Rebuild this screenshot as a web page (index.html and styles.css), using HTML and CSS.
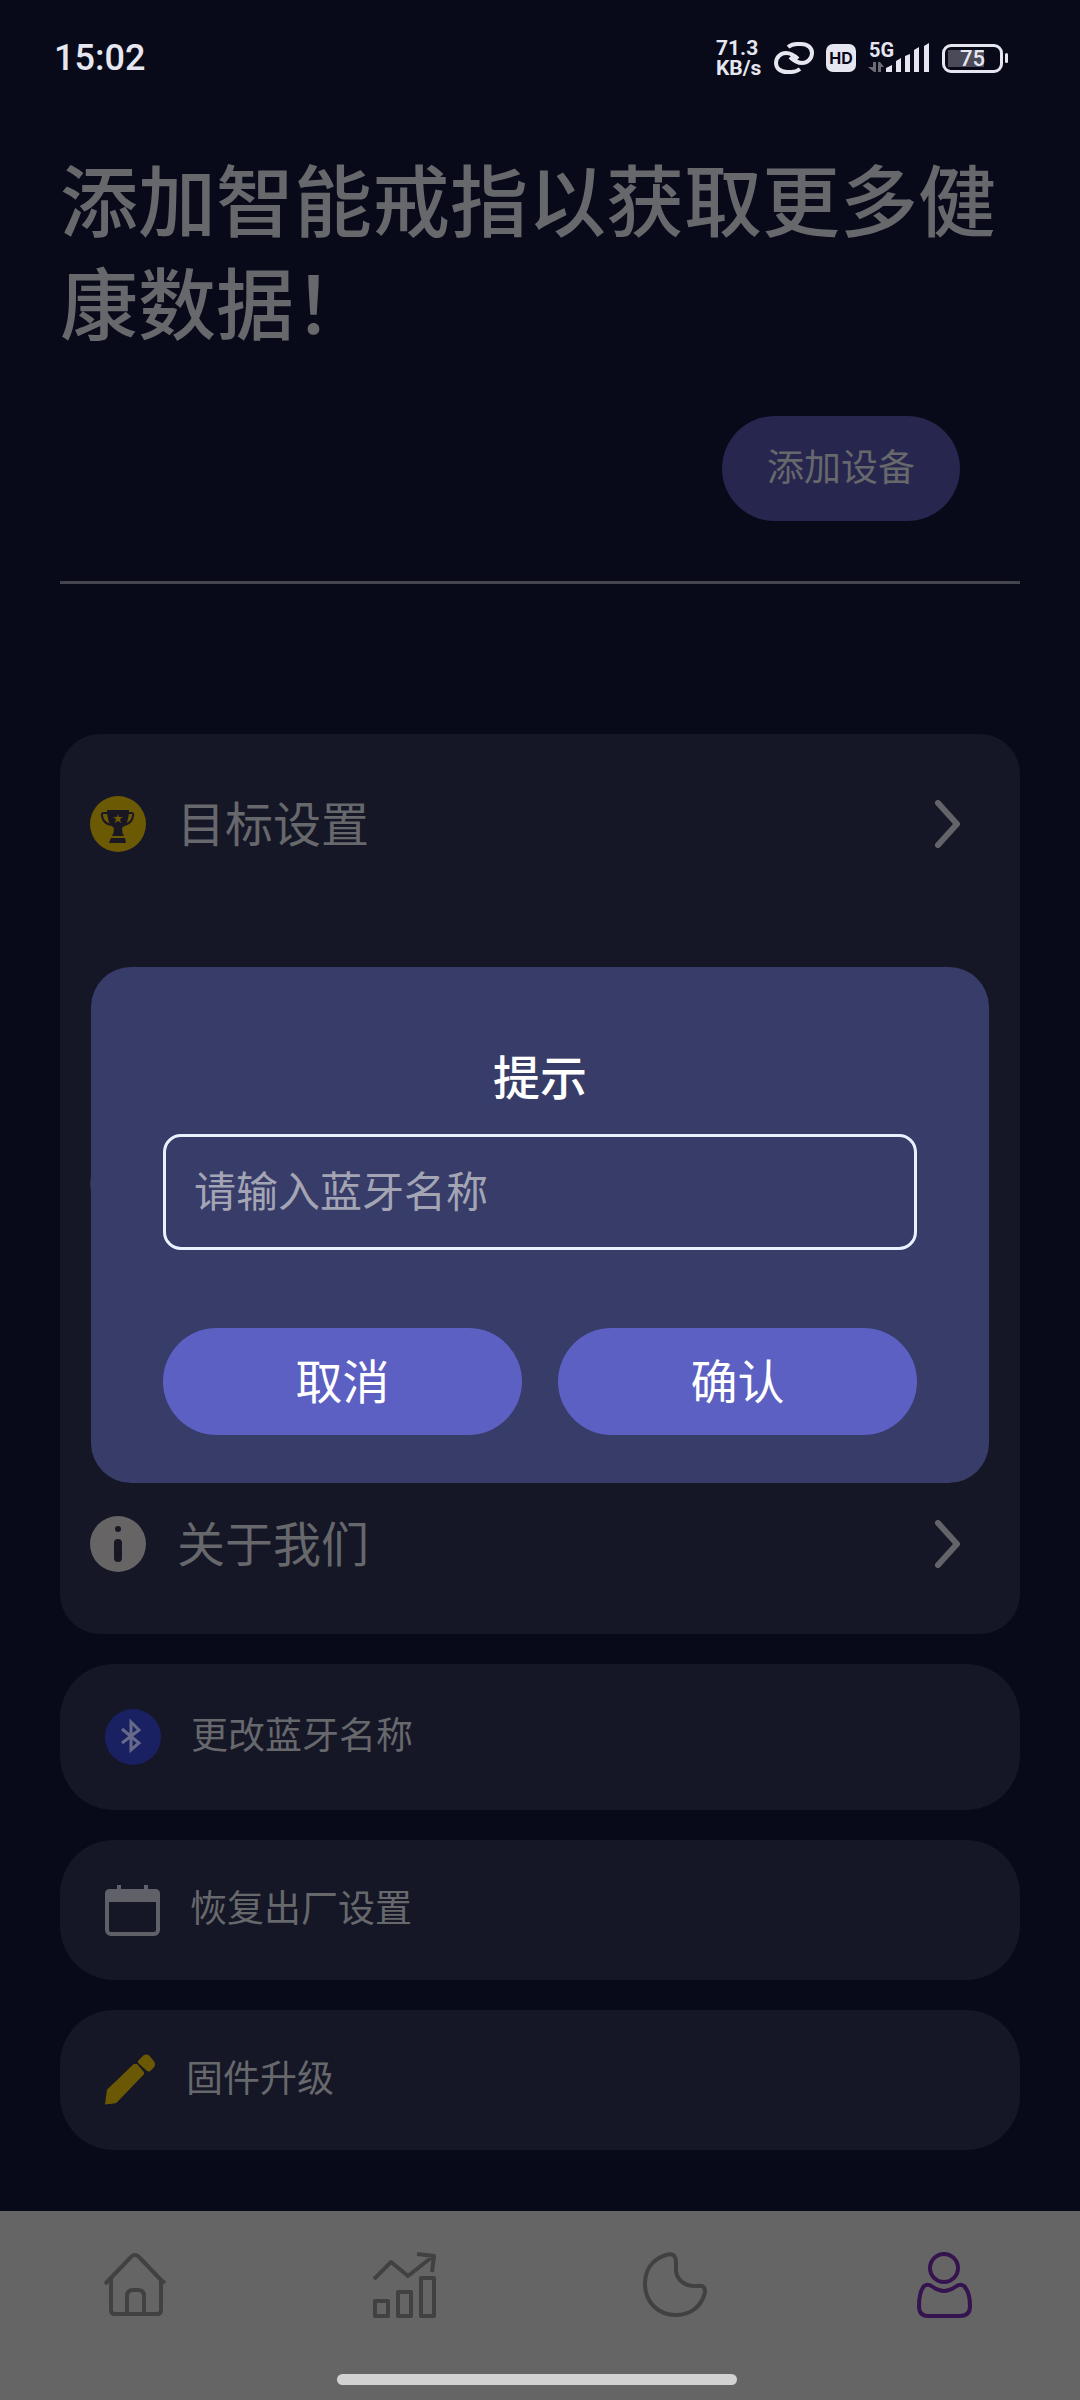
FILE: index.html
```html
<!DOCTYPE html>
<html lang="zh-CN">
<head>
<meta charset="utf-8">
<meta name="viewport" content="width=device-width, initial-scale=1">
<title>我的</title>
<link rel="stylesheet" href="styles.css">
</head>
<body>
<header class="status">
  <time class="clock">15:02</time>
  <div class="indicators">
    <div class="speed"><span>71.3</span><span>KB/s</span></div>
    <svg width="40" height="32" viewBox="0 0 40 32" fill="none" stroke="currentColor" stroke-width="4">
      <path d="M14 5Q18 2 23 2H27C34 2 38 6 38 11C38 17 33 21 28 21C23 21 20 19 16 15"/>
      <path d="M26 27Q22 30 17 30H13C6 30 2 26 2 21C2 15 7 11 12 11C17 11 20 13 24 17"/>
    </svg>
    <span class="hd">HD</span>
    <div class="signal">
      <span class="net">5G</span>
      <svg width="62" height="32" viewBox="0 0 62 32" fill="currentColor">
        <path opacity=".45" d="M5 20h3v10H6L0 25h5zM10 20h2l4 5h-3v5h-3z"/>
        <path d="M18 30v-4l6-3v7zM28 30V19l5-3v14zM37 30V14l5-2v18zM46 30V8l5-3v25zM56 30V4l5-3v29z"/>
      </svg>
    </div>
    <div class="battery"><span class="battery-body">75</span><span class="battery-tip"></span></div>
  </div>
</header>

<main class="page">
  <h1 class="headline">添加智能戒指以获取更多健康数据！</h1>
  <button class="add-device" type="button">添加设备</button>
  <hr class="divider">

  <ul class="menu">
    <li><a class="menu-row" href="#goal">
      <svg width="56" height="56" viewBox="0 0 56 56">
        <circle cx="28" cy="28" r="28" fill="#6c5904"/>
        <path d="M18 17h-4q-3 0-2 3q1 7 9 9M37 17h4q3 0 2 3q-1 7-9 9" fill="none" stroke="#191724" stroke-width="2"/>
        <path d="M17 14h22q0 14-7 18q0 5 2 8H22q2-3 2-8q-7-4-7-18zM21 42h14l1 5H19z" fill="#191724"/>
        <path d="M28 18l1 3h4l-3 2 1 4-3-2-3 2 1-4-3-2h4z" fill="#6c5904"/>
      </svg>
      <span class="menu-label">目标设置</span>
      <svg class="chevron" width="26" height="48" viewBox="0 0 26 48"><path d="M3 3L22 24L3 45"/></svg>
    </a></li>
    <li class="menu-row"></li>
    <li class="menu-row">
      <svg width="56" height="56" viewBox="0 0 56 56"><circle cx="28" cy="28" r="28" fill="#40382a"/></svg>
    </li>
    <li class="menu-row"></li>
    <li><a class="menu-row" href="#about">
      <svg width="56" height="56" viewBox="0 0 56 56">
        <circle cx="28" cy="28" r="28" fill="#666465"/>
        <circle cx="28" cy="13" r="3" fill="#191724"/>
        <rect x="24" y="23" width="8" height="23" rx="4" fill="#191724"/>
      </svg>
      <span class="menu-label">关于我们</span>
      <svg class="chevron" width="26" height="48" viewBox="0 0 26 48"><path d="M3 3L22 24L3 45"/></svg>
    </a></li>
  </ul>

  <button class="action action-tall" type="button">
    <svg width="56" height="56" viewBox="0 0 56 56">
      <circle cx="28" cy="28" r="28" fill="#1a2162"/>
      <path d="M17 20L34 34L26 41V13L34 21L17 34" fill="none" stroke="#67698a" stroke-width="3"/>
    </svg>
    更改蓝牙名称
  </button>
  <button class="action" type="button">
    <svg width="55" height="56" viewBox="0 0 55 56">
      <path d="M12 3h4v5h-4zM39 3h4v5h-4z" fill="#606168"/>
      <rect x="2" y="9" width="51" height="43" rx="4" fill="none" stroke="#606168" stroke-width="4"/>
      <path d="M0 20v-8q0-5 5-5h45q5 0 5 5v8z" fill="#606168"/>
    </svg>
    恢复出厂设置
  </button>
  <button class="action" type="button">
    <svg width="51" height="52" viewBox="0 0 52 52" fill="#6b5804">
      <path d="M0 51L2 36L29 10Q31 9 33 10L39 17Q41 19 39 21L14 47Q12 50 9 50Z"/>
      <path d="M34 6L39 1Q42-1 45 1L50 7Q52 10 50 13L46 17Q44 18 42 16L34 9Q33 7 34 6Z"/>
    </svg>
    固件升级
  </button>
</main>

<nav class="tabs">
  <a href="#home" aria-label="首页">
    <svg width="64" height="66" viewBox="0 0 64 66">
      <path d="M2 32L27 6Q32 0 37 6L58 28L62 31M8 27V58Q8 62 12 62H54Q58 62 58 58V27M24 62V44Q24 38 30 38H35Q41 38 41 44V62"/>
    </svg>
  </a>
  <a href="#stats" aria-label="统计">
    <svg width="64" height="66" viewBox="0 0 64 66">
      <path d="M1 27L18 10L35 24L59 5M44 2L61 4L59 20M2 49H15V64H2zM25 40H38V64H25zM48 26H61V64H48z"/>
    </svg>
  </a>
  <a href="#sleep" aria-label="睡眠">
    <svg width="64" height="66" viewBox="0 0 64 66">
      <path d="M23 3Q32 0 33 9V19C34 28 42 34 51 34H56Q62 33 62 40C59 54 48 63 33 63C15 63 2 50 2 32C2 17 10 7 23 3Z"/>
    </svg>
  </a>
  <a class="active" href="#me" aria-label="我的" aria-current="page">
    <svg width="64" height="66" viewBox="0 0 64 66">
      <circle cx="31" cy="16" r="14"/>
      <path d="M11 34Q15 31 20 35Q31 43 42 35Q47 31 51 34C56 39 57 47 57 54Q57 64 47 64H15Q6 64 6 54C6 47 7 39 11 34Z"/>
    </svg>
  </a>
  <span class="gesture-bar"></span>
</nav>

<div class="overlay">
  <form class="dialog" role="dialog" aria-labelledby="dialog-title">
    <h2 class="dialog-title" id="dialog-title">提示</h2>
    <input class="field" type="text" aria-label="蓝牙名称" placeholder="请输入蓝牙名称">
    <div class="dialog-actions">
      <button type="button">取消</button>
      <button type="button">确认</button>
    </div>
  </form>
</div>
</body>
</html>
```
FILE: styles.css
```css
* {
  box-sizing: border-box;
}

body {
  margin: 0;
  min-height: 100vh;
  display: flex;
  flex-direction: column;
  background: #080919;
  color: #66686c;
  font-family: Roboto, "Noto Sans CJK SC", sans-serif;
}

a {
  color: inherit;
  text-decoration: none;
}

button,
input {
  margin: 0;
  border: 0;
  font: inherit;
  color: inherit;
}

svg {
  display: block;
  flex: none;
}

/* Status bar */
.status {
  display: flex;
  align-items: center;
  justify-content: space-between;
  height: 116px;
  padding: 0 72px 0 54px;
  color: #e6e6f0;
}

.clock {
  font-size: 36px;
  font-weight: 500;
}

.indicators {
  display: flex;
  align-items: center;
  gap: 12px;
}

.speed {
  display: flex;
  flex-direction: column;
  width: 46px;
  font-size: 21px;
  font-weight: 700;
  line-height: 20px;
}

.hd {
  width: 30px;
  height: 28px;
  border-radius: 7px;
  background: #e6e6f0;
  color: #080919;
  font-family: Inter, sans-serif;
  font-size: 16px;
  font-weight: 700;
  line-height: 28px;
  text-align: center;
}

.signal {
  position: relative;
}

.net {
  position: absolute;
  left: 1px;
  top: -4px;
  font-size: 20px;
  font-weight: 700;
  line-height: 24px;
}

.battery {
  display: flex;
  align-items: center;
  gap: 2px;
}

.battery-body {
  width: 61px;
  height: 29px;
  border: 3px solid #e6e6f0;
  border-radius: 9px;
  padding: 2px;
  background: linear-gradient(90deg, #4a4a58 36px, transparent 36px) 3px 3px / 100% 17px no-repeat;
  font-size: 22px;
  font-weight: 500;
  line-height: 20px;
  text-align: center;
}

.battery-tip {
  width: 3px;
  height: 10px;
  border-radius: 2px;
  background: #e6e6f0;
}

/* Page */
.page {
  display: flex;
  flex-direction: column;
  padding: 37px 60px 61px;
}

.headline {
  margin: 0 -20px 57px 0;
  font-size: 78px;
  font-weight: 500;
  line-height: 103px;
}

.add-device {
  align-self: flex-end;
  height: 105px;
  margin-right: 60px;
  padding: 0 45px;
  border-radius: 53px;
  background: #26264e;
  font-size: 37px;
  line-height: 46px;
}

.divider {
  width: 100%;
  height: 3px;
  margin: 60px 0 150px;
  border: 0;
  background: #44454d;
}

.menu {
  margin: 0 0 30px;
  padding: 0;
  border-radius: 40px;
  background: #151626;
  list-style: none;
}

.menu-row {
  display: flex;
  align-items: center;
  gap: 31px;
  height: 180px;
  padding: 0 59px 0 30px;
}

.menu-label {
  flex: 1;
  padding-top: 4px;
  font-size: 48px;
  line-height: 60px;
}

.chevron {
  fill: none;
  stroke: #636469;
  stroke-width: 6;
  stroke-linecap: round;
  stroke-linejoin: round;
}

.action {
  display: flex;
  align-items: center;
  gap: 30px;
  height: 140px;
  padding: 0 45px;
  border-radius: 54px;
  background: #151626;
  font-size: 37px;
  line-height: 46px;
}

.action + .action {
  margin-top: 30px;
}

.action-tall {
  height: 146px;
}

/* Bottom tabs */
.tabs {
  position: relative;
  display: grid;
  grid-template-columns: repeat(4, 1fr);
  justify-items: center;
  align-items: start;
  height: 189px;
  margin-top: auto;
  padding-top: 41px;
  background: #656565;
}

.tabs svg {
  fill: none;
  stroke: #414141;
  stroke-width: 4;
  stroke-linejoin: round;
}

.tabs .active svg {
  stroke: #34134f;
}

.gesture-bar {
  position: absolute;
  left: 50%;
  bottom: 15px;
  width: 400px;
  height: 11px;
  margin-left: -203px;
  border-radius: 6px;
  background: #d2d2d2;
}

/* Dialog */
.overlay {
  position: fixed;
  inset: 0;
  display: flex;
  align-items: center;
  padding: 50px 91px 0;
}

.dialog {
  width: 100%;
  padding: 84px 72px 48px;
  border-radius: 40px;
  background: #373c68;
  color: #fff;
}

.dialog-title {
  margin: 0 0 27px;
  font-size: 47px;
  font-weight: 500;
  line-height: 56px;
  text-align: center;
}

.field {
  display: block;
  width: 100%;
  height: 116px;
  padding: 0 28px;
  border: 3px solid #e9f0ff;
  border-radius: 18px;
  background: transparent;
  font-size: 42px;
}

.field::placeholder {
  color: #a4a5b4;
  opacity: 1;
}

.dialog-actions {
  display: grid;
  grid-template-columns: 1fr 1fr;
  gap: 36px;
  margin-top: 78px;
}

.dialog-actions button {
  height: 107px;
  padding: 2px 0 0;
  border-radius: 54px;
  background: #5c60c2;
  font-size: 47px;
  line-height: 56px;
}
```
